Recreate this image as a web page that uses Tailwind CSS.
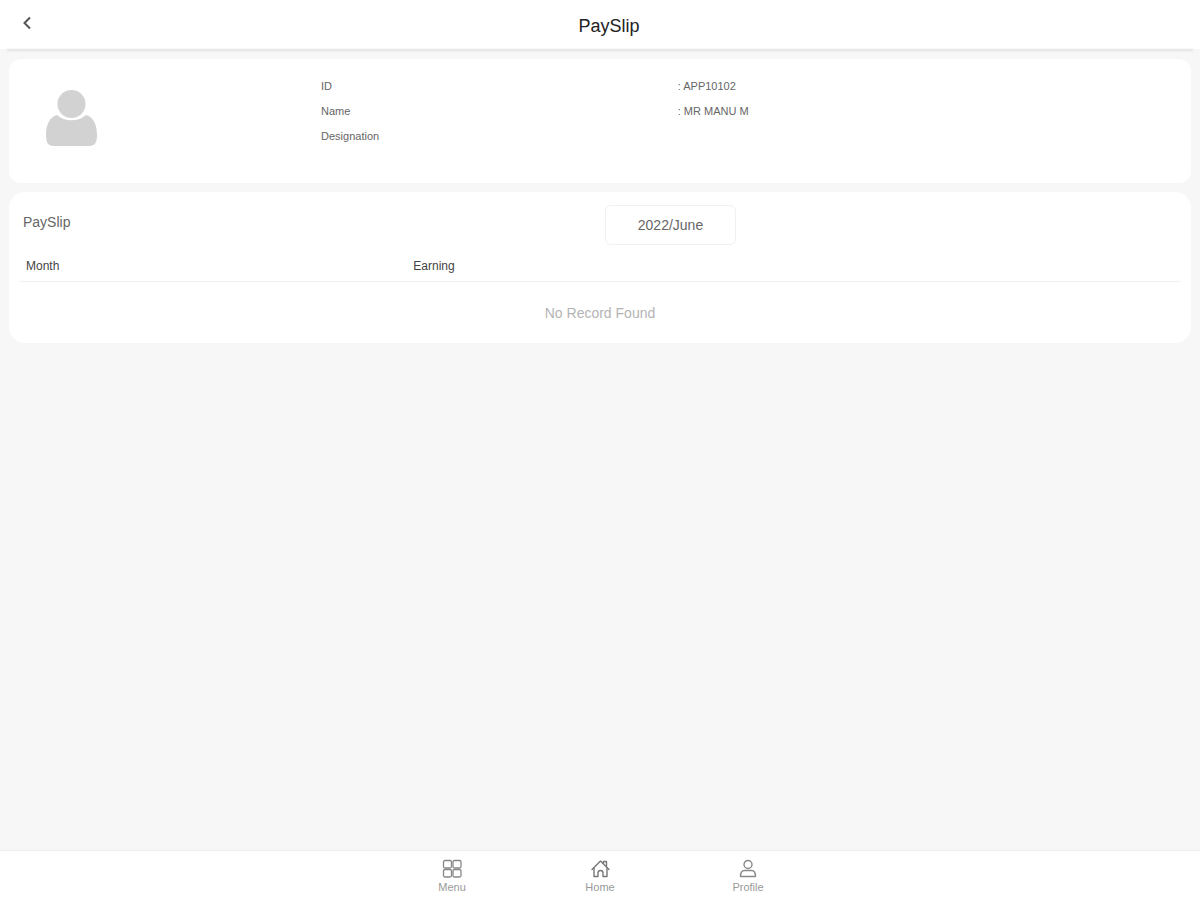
<!DOCTYPE html>
<html lang="en">
<head>
    <meta charset="UTF-8">
    <meta name="viewport" content="width=device-width, initial-scale=1.0">
    <title>PaySlip</title>
    <!-- Tailwind CSS CDN -->
    <script src="https://cdn.jsdelivr.net/npm/@tailwindcss/browser@4"></script>
</head>
<body class="min-h-screen flex flex-col bg-[#f7f7f7] font-['Liberation_Sans',Arial,sans-serif] text-[#666]">

    <!-- Header -->
    <header class="bg-white">
        <div class="grid grid-cols-[48px_1fr_30px] items-center h-[49px]">
            <button type="button" aria-label="Back" class="flex justify-center pl-2 pb-1">
                <svg class="w-4 h-4" viewBox="0 0 16 16" fill="none" stroke="#555" stroke-width="2"><path d="M10 2.500 4.500 8l5.500 5.500"/></svg>
            </button>
            <h1 class="text-center text-lg font-normal text-[#222] pt-[2px]">PaySlip</h1>
        </div>
        <div class="mx-2 h-0 shadow-[0_1px_2px_1px_#e2e2e2]"></div>
    </header>

    <main class="flex-1 px-[9px] pt-[10px]">
        <!-- Employee details -->
        <section class="grid grid-cols-[26.4%_1fr] bg-white rounded-xl h-[124px]">
            <svg class="w-[54px] h-[60px] ml-9 mt-[29px]" viewBox="0 0 54 60" fill="#d2d2d2">
                <circle cx="26.5" cy="16" r="14"/>
                <path d="M12 27c7 7 22 7 29 0 8 2 11 11 11 20 0 9-3 11-9 11H10c-6 0-9-2-9-11 0-9 3-18 11-20Z"/>
            </svg>
            <dl class="grid grid-cols-[41%_1fr] auto-rows-[25px] content-start items-center pt-[15px] text-[11px]">
                <dt>ID</dt>
                <dd>: APP10102</dd>
                <dt>Name</dt>
                <dd>: MR MANU M</dd>
                <dt>Designation</dt>
                <dd></dd>
            </dl>
        </section>

        <!-- Payslip list -->
        <section class="mt-[9px] px-[10px] pt-[13px] pb-5 bg-white rounded-2xl">
            <div class="grid grid-cols-2 items-center mb-2">
                <h2 class="pl-1 pb-[6px] text-sm">PaySlip</h2>
                <div class="pl-[5px]">
                    <button type="button" class="w-[131px] h-10 border border-[#f0f0f0] rounded-md text-sm">2022/June</button>
                </div>
            </div>
            <table class="w-full table-fixed text-left">
                <thead>
                    <tr class="border-b border-[#f2f2f2] text-xs text-[#444]">
                        <th class="h-7 pl-[7px] pb-[2px] font-normal">Month</th>
                        <th class="h-7 pl-[7px] pb-[2px] font-normal">Earning</th>
                        <th class="h-7"></th>
                    </tr>
                </thead>
                <tbody>
                    <tr>
                        <td colspan="3" class="pt-[21px] text-center text-sm text-[#b4b4b4]">No Record Found</td>
                    </tr>
                </tbody>
            </table>
        </section>
    </main>

    <!-- Bottom tabs -->
    <nav class="flex justify-center h-[50px] bg-white border-t border-[#eee] text-[11px] leading-4 text-[#999]">
        <a href="#" class="w-[148px] flex flex-col items-center pt-2">
            <svg class="w-5 h-5" viewBox="0 0 20 20" fill="none" stroke="#888" stroke-width="1.3">
                <rect x="1.5" y="1.5" width="8" height="7.5" rx="1.5"/>
                <rect x="11" y="1.5" width="8" height="7.5" rx="1.5"/>
                <rect x="1.5" y="10.5" width="8" height="7.5" rx="1.5"/>
                <rect x="11" y="10.5" width="8" height="7.5" rx="1.5"/>
            </svg>
            Menu
        </a>
        <a href="#" class="w-[148px] flex flex-col items-center pt-2">
            <svg class="w-5 h-5" viewBox="0 0 20 20" fill="none" stroke="#777" stroke-width="1.4" stroke-linejoin="round" stroke-linecap="round">
                <path d="M2 10.500 10.500 2l8.500 8.500"/>
                <path d="M13.500 4.500V2.500h3v5"/>
                <path d="M4 9v8.500h4V14c0-1.500 1-2.500 2.500-2.500S13 12.500 13 14v3.500h4V9"/>
            </svg>
            Home
        </a>
        <a href="#" class="w-[148px] flex flex-col items-center pt-2">
            <svg class="w-5 h-5" viewBox="0 0 20 20" fill="none" stroke="#888" stroke-width="1.4" stroke-linejoin="round">
                <circle cx="10" cy="5.500" r="4"/>
                <path d="M6.500 11.500h7c2.500 0 4 2.500 4 6h-15c0-3.500 1.500-6 4-6Z"/>
            </svg>
            Profile
        </a>
    </nav>

</body>
</html>
